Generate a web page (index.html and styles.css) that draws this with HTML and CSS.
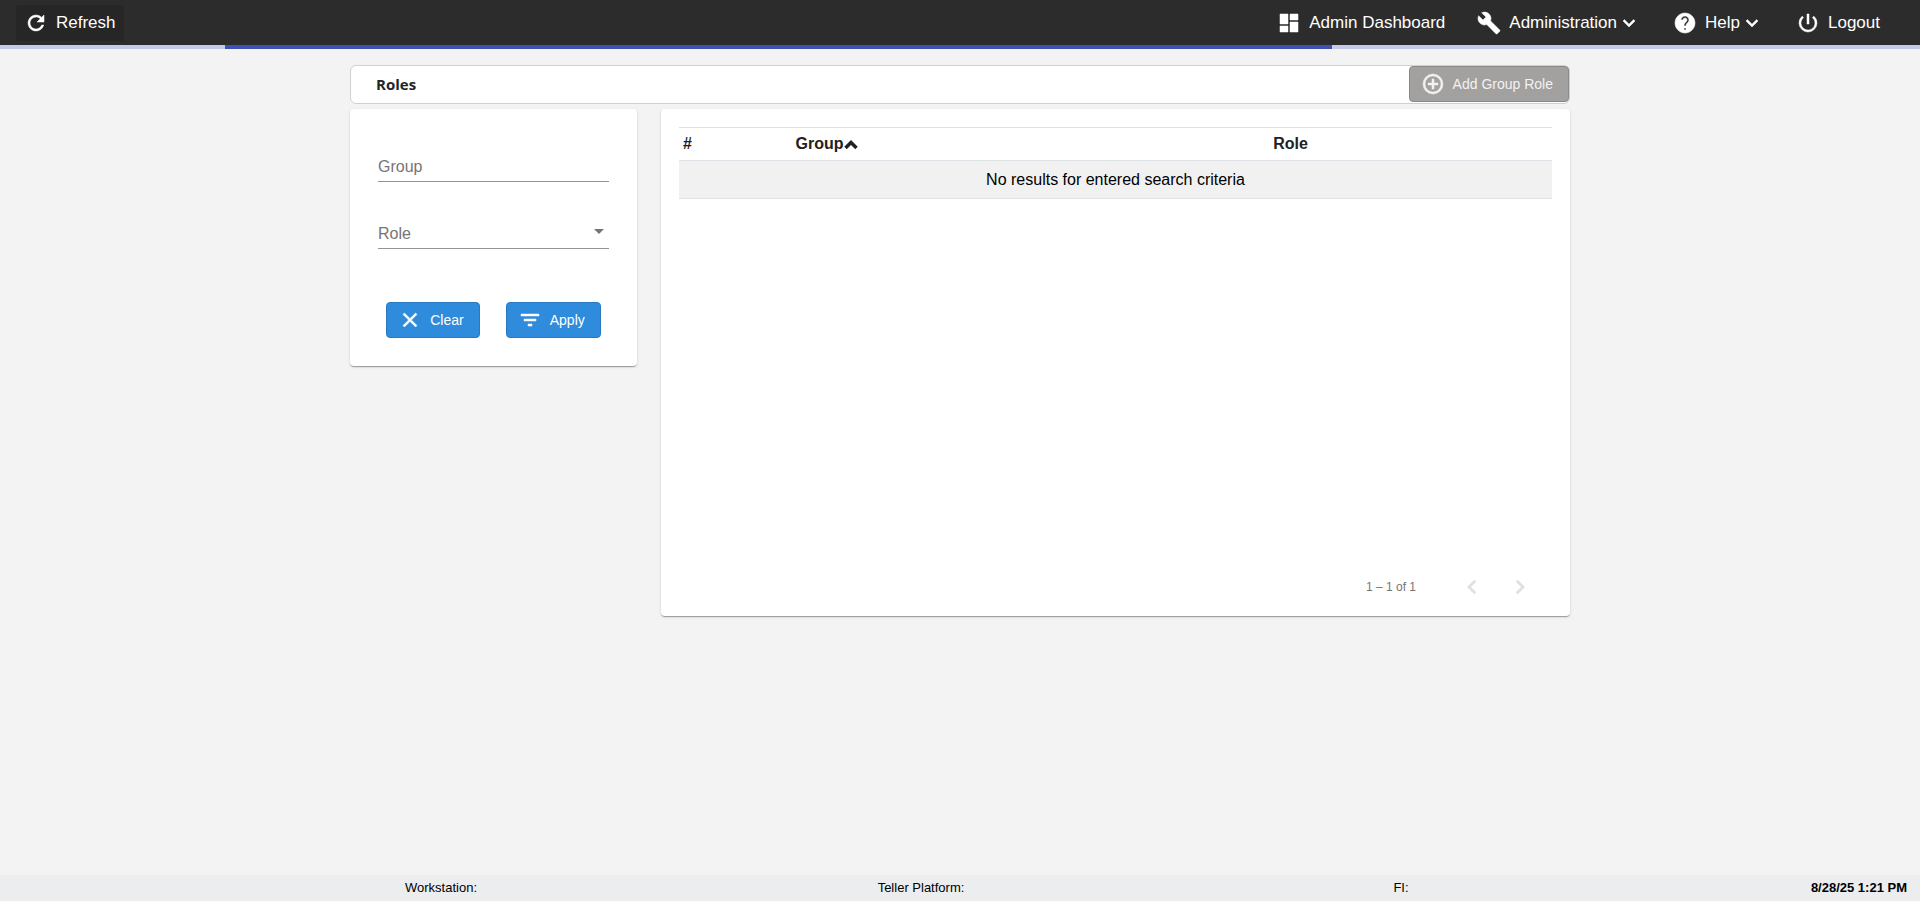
FILE: index.html
```html
<!DOCTYPE html>
<html lang="en">
<head>
<meta charset="utf-8">
<title>Roles</title>
<link rel="stylesheet" href="styles.css">
</head>
<body>
<header class="topbar">
  <button type="button" class="refresh">
    <svg class="icon" viewBox="0 0 24 24"><path d="M17.65 6.35A7.96 7.96 0 0 0 12 4a8 8 0 1 0 7.73 10h-2.08A6 6 0 1 1 12 6c1.66 0 3.14.69 4.22 1.78L13 11h7V4z"/></svg>
    <span>Refresh</span>
  </button>
  <nav class="menu">
    <a class="menu-item" href="#dashboard">
      <svg class="icon" viewBox="0 0 24 24"><path d="M3 13h8V3H3zm0 8h8v-6H3zm10 0h8V11h-8zm0-18v6h8V3z"/></svg>
      <span>Admin Dashboard</span>
    </a>
    <button type="button" class="menu-item">
      <svg class="icon" viewBox="0 0 24 24"><path d="M22.7 19l-9.1-9.1c.9-2.3.4-5-1.5-6.9-2-2-5-2.4-7.4-1.3L9 6 6 9 1.6 4.7C.4 7.1.9 10.1 2.9 12.1c1.9 1.9 4.6 2.4 6.9 1.5l9.1 9.1c.4.4 1 .4 1.4 0l2.3-2.3c.5-.4.5-1.1.1-1.4z"/></svg>
      <span class="menu-text">Administration<svg class="icon" viewBox="0 0 24 24"><path d="M16.59 8.59L12 13.17 7.41 8.59 6 10l6 6 6-6z"/></svg></span>
    </button>
    <button type="button" class="menu-item">
      <svg class="icon" viewBox="0 0 24 24"><path d="M12 2C6.48 2 2 6.48 2 12s4.48 10 10 10 10-4.48 10-10S17.52 2 12 2zm1 17h-2v-2h2v2zm2.07-7.75l-.9.92C13.45 12.9 13 13.5 13 15h-2v-.5c0-1.1.45-2.1 1.17-2.83l1.24-1.26c.37-.36.59-.86.59-1.41 0-1.1-.9-2-2-2s-2 .9-2 2H8c0-2.21 1.79-4 4-4s4 1.79 4 4c0 .88-.36 1.68-.93 2.25z"/></svg>
      <span class="menu-text">Help<svg class="icon" viewBox="0 0 24 24"><path d="M16.59 8.59L12 13.17 7.41 8.59 6 10l6 6 6-6z"/></svg></span>
    </button>
    <a class="menu-item" href="#logout">
      <svg class="icon" viewBox="0 0 24 24"><path d="M13 3h-2v10h2zm4.83 2.17l-1.42 1.42A6.92 6.92 0 0 1 19 12a7 7 0 1 1-11.42-5.42L6.17 5.17A8.93 8.93 0 0 0 3 12a9 9 0 1 0 18 0 8.93 8.93 0 0 0-3.17-6.83z"/></svg>
      <span>Logout</span>
    </a>
  </nav>
</header>
<div class="progress" role="progressbar" aria-label="Loading"><div class="progress-fill"></div></div>

<main class="page">
  <div class="titlebar">
    <h1 class="title">Roles</h1>
    <button type="button" class="btn btn-disabled" disabled>
      <svg class="icon" viewBox="0 0 24 24"><path d="M13 7h-2v4H7v2h4v4h2v-4h4v-2h-4zm-1-5a10 10 0 1 0 0 20 10 10 0 0 0 0-20zm0 18a8 8 0 1 1 0-16 8 8 0 0 1 0 16z"/></svg>
      <span>Add Group Role</span>
    </button>
  </div>

  <div class="columns">
    <form class="card filter">
      <div class="field">
        <input class="control" id="group" type="text">
        <label class="field-label" for="group">Group</label>
      </div>
      <div class="field">
        <select class="control" id="role"><option value=""></option></select>
        <label class="field-label" for="role">Role</label>
        <svg class="arrow" viewBox="0 0 10 5"><path d="M0 0h10L5 5z"/></svg>
      </div>
      <div class="actions">
        <button type="reset" class="btn">
          <svg class="icon" viewBox="0 0 24 24"><path d="M19 6.41L17.59 5 12 10.59 6.41 5 5 6.41 10.59 12 5 17.59 6.41 19 12 13.41 17.59 19 19 17.59 13.41 12z"/></svg>
          <span>Clear</span>
        </button>
        <button type="button" class="btn">
          <svg class="icon" viewBox="0 0 24 24"><path d="M10 18h4v-2h-4zM3 6v2h18V6zm3 7h12v-2H6z"/></svg>
          <span>Apply</span>
        </button>
      </div>
    </form>

    <section class="card results">
      <table class="table">
        <colgroup><col class="col-num"><col class="col-group"><col></colgroup>
        <thead>
          <tr>
            <th scope="col">#</th>
            <th scope="col">Group<svg class="sort" viewBox="0 0 14 9"><path d="M1.500 8L7 2.500 12.500 8"/></svg></th>
            <th scope="col">Role</th>
          </tr>
        </thead>
        <tbody>
          <tr><td colspan="3">No results for entered search criteria</td></tr>
        </tbody>
      </table>
      <div class="paginator">
        <span class="range">1 – 1 of 1</span>
        <button type="button" class="pager" aria-label="Previous page" disabled>
          <svg viewBox="0 0 24 24"><path d="M15.410 7.410L14 6l-6 6 6 6 1.410-1.410L10.830 12z"/></svg>
        </button>
        <button type="button" class="pager" aria-label="Next page" disabled>
          <svg viewBox="0 0 24 24"><path d="M10 6L8.590 7.410 13.170 12l-4.580 4.590L10 18l6-6z"/></svg>
        </button>
      </div>
    </section>
  </div>
</main>

<footer class="statusbar">
  <span>Workstation:</span>
  <span>Teller Platform:</span>
  <span>FI:</span>
  <time class="clock">8/28/25 1:21 PM</time>
</footer>
</body>
</html>
```

FILE: styles.css
```css
* { box-sizing: border-box; }

body {
  margin: 0;
  min-height: 100vh;
  display: flex;
  flex-direction: column;
  background: #f3f3f3;
  color: #212529;
  font-family: "Liberation Sans", Arial, sans-serif;
  font-size: 16px;
}

button { font-family: inherit; margin: 0; }

.icon {
  width: 24px;
  height: 24px;
  flex: none;
  fill: currentColor;
  stroke: currentColor;
  stroke-width: .5;
}

/* top bar */
.topbar {
  display: flex;
  justify-content: space-between;
  align-items: center;
  height: 45px;
  padding: 0 40px 0 16px;
  background: #2c2c2c;
}

.refresh,
.menu-item {
  display: flex;
  align-items: center;
  gap: 8px;
  height: 36px;
  padding: 0;
  border: 0;
  background: none;
  color: #fff;
  font-size: 17px;
  text-decoration: none;
}

.refresh {
  padding: 0 8px;
  border-radius: 4px;
  background: #262626;
}

.menu {
  display: flex;
  gap: 32px;
}

.menu-text {
  display: flex;
  align-items: center;
}

.progress {
  height: 4px;
  background: #c5cae9;
}

.progress-fill {
  width: 57.66%;
  height: 100%;
  margin-left: 11.72%;
  background: #3f51b5;
}

/* page */
.page {
  flex: 1;
  width: 100%;
  max-width: 1220px;
  margin: 0 auto;
  padding: 16px 0;
}

.titlebar {
  display: flex;
  justify-content: space-between;
  align-items: flex-start;
  margin-bottom: 5px;
  padding-left: 25px;
  background: #fff;
  border: 1px solid #d0d0d0;
  border-radius: 6px;
}

.title {
  margin: 0;
  font: bold 15px/37px "Open Sans", "Noto Sans", sans-serif;
}

.btn {
  display: flex;
  align-items: center;
  gap: 8px;
  height: 36px;
  padding: 0 15px 0 11px;
  border: 1px solid #2a7ac0;
  border-radius: 4px;
  background: #2f8bdc;
  color: #fff;
  font-size: 14px;
}

.btn-disabled {
  border-color: #8b8a88;
  background: #a2a19f;
  color: #f2f2f2;
}

.columns {
  display: flex;
  align-items: flex-start;
  gap: 24px;
}

.card {
  background: #fff;
  border-radius: 4px;
  box-shadow: 0 2px 1px -1px rgba(0, 0, 0, .2), 0 1px 1px rgba(0, 0, 0, .14), 0 1px 3px rgba(0, 0, 0, .12);
}

.filter {
  flex: 0 0 287px;
  padding: 33px 28px 28px;
}

.field {
  position: relative;
  margin-bottom: 27px;
}

.control {
  display: block;
  width: 100%;
  height: 40px;
  padding: 8px 0 0;
  border: 0;
  border-bottom: 1px solid #949494;
  border-radius: 0;
  background: none;
  font: inherit;
  appearance: none;
  outline: 0;
}

.field-label {
  position: absolute;
  left: 0;
  top: 16px;
  line-height: 18px;
  color: #757575;
  pointer-events: none;
}

.arrow {
  position: absolute;
  right: 5px;
  top: 20px;
  width: 10px;
  height: 5px;
  fill: #757575;
  pointer-events: none;
}

.actions {
  display: flex;
  justify-content: center;
  gap: 26px;
  margin-top: 53px;
}

.results {
  flex: 1;
  display: flex;
  flex-direction: column;
  min-height: 507px;
  padding: 18px 18px 9px;
}

.table {
  width: 100%;
  table-layout: fixed;
  border-collapse: collapse;
}

.col-num { width: 12.9%; }
.col-group { width: 54.7%; }

.table th,
.table td {
  padding: 0 4px;
  border-top: 1px solid #dee2e6;
  border-bottom: 1px solid #dee2e6;
}

.table th {
  height: 33px;
  padding-bottom: 7px;
  text-align: left;
  vertical-align: bottom;
  color: #212121;
}

.table td {
  height: 38px;
  background: #f1f1f1;
  color: #000;
  text-align: center;
}

.sort {
  width: 14px;
  height: 9px;
  fill: none;
  stroke: #212121;
  stroke-width: 3.5;
}

.paginator {
  display: flex;
  align-items: center;
  justify-content: flex-end;
  gap: 8px;
  margin-top: auto;
  padding-right: 12px;
}

.range {
  margin-right: 28px;
  font-size: 12px;
  color: #757575;
}

.pager {
  display: flex;
  align-items: center;
  justify-content: center;
  width: 40px;
  height: 40px;
  padding: 0;
  border: 0;
  background: none;
}

.pager svg {
  width: 28px;
  height: 28px;
  fill: #e0e0e0;
  stroke: #e0e0e0;
  stroke-width: .5;
}

/* status bar */
.statusbar {
  display: grid;
  grid-template-columns: repeat(3, 1fr) 266px;
  align-items: center;
  height: 26px;
  padding: 0 13px 2px 201px;
  background: #ebedef;
  color: #000;
  font-size: 13px;
  text-align: center;
}

.clock {
  font-weight: bold;
  text-align: right;
}
```
